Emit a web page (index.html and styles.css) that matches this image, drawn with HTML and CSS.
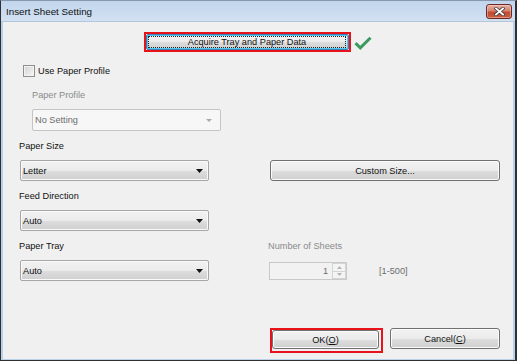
FILE: index.html
```html
<!DOCTYPE html>
<html>
<head>
<meta charset="utf-8">
<title>Insert Sheet Setting</title>
<link rel="stylesheet" href="styles.css">
</head>
<body>
<div class="window">
  <div class="titlebar">
    <span class="title">Insert Sheet Setting</span>
    <span class="close">
      <svg width="11" height="9" viewBox="0 0 11 9">
        <path d="M2 1.5L9 7.5M9 1.5L2 7.5" stroke="#3b3b3b" stroke-width="3.4" stroke-linecap="square"/>
        <path d="M2 1.5L9 7.5M9 1.5L2 7.5" stroke="#ffffff" stroke-width="1.8" stroke-linecap="square"/>
      </svg>
    </span>
  </div>
  <div class="client">
    <div class="acquire-row">
      <div class="annot">
        <div class="btn default"><span class="focus">Acquire Tray and Paper Data</span></div>
      </div>
      <svg class="check" width="18" height="14" viewBox="0 0 18 14">
        <path d="M1.5 7.2L6.3 11.8L16.5 1.8" fill="none" stroke="#3b9b5f" stroke-width="3"/>
      </svg>
    </div>

    <div class="chk-row">
      <span class="chk"></span>
      <span class="chk-label">Use Paper Profile</span>
    </div>

    <div class="indent">
      <div class="lbl dim">Paper Profile</div>
      <div class="combo off">
        <span>No Setting</span>
        <svg width="6" height="3" viewBox="0 0 6 3"><path d="M0 0h6L3 3z" fill="#a9a9a9"/></svg>
      </div>
    </div>

    <div class="lbl lbl-gap">Paper Size</div>
    <div class="grid row-gap">
      <div class="combo">
        <span>Letter</span>
        <svg width="7" height="4" viewBox="0 0 7 4"><path d="M0 0h7L3.5 4z" fill="#111"/></svg>
      </div>
      <div class="btn custom">Custom Size...</div>
    </div>

    <div class="lbl lbl-gap">Feed Direction</div>
    <div class="grid row-gap">
      <div class="combo">
        <span>Auto</span>
        <svg width="7" height="4" viewBox="0 0 7 4"><path d="M0 0h7L3.5 4z" fill="#111"/></svg>
      </div>
    </div>

    <div class="grid lbl-gap">
      <div class="lbl">Paper Tray</div>
      <div class="lbl dim">Number of Sheets</div>
    </div>
    <div class="grid row-gap">
      <div class="combo">
        <span>Auto</span>
        <svg width="7" height="4" viewBox="0 0 7 4"><path d="M0 0h7L3.5 4z" fill="#111"/></svg>
      </div>
      <div class="sheets">
        <div class="spin">
          <span class="spin-val">1</span>
          <span class="spin-btns">
            <span class="spin-b"><svg width="5" height="3" viewBox="0 0 5 3"><path d="M0 3h5L2.5 0z" fill="#b5b5b5"/></svg></span>
            <span class="spin-b"><svg width="5" height="3" viewBox="0 0 5 3"><path d="M0 0h5L2.5 3z" fill="#b5b5b5"/></svg></span>
          </span>
        </div>
        <span class="range">[1-500]</span>
      </div>
    </div>

    <div class="footer">
      <div class="annot ok-annot">
        <div class="btn ok">OK(<u>O</u>)</div>
      </div>
      <div class="btn cancel">Cancel(<u>C</u>)</div>
    </div>
  </div>
</div>
</body>
</html>
```

FILE: styles.css
```css
* { box-sizing: border-box; }
html, body { margin: 0; padding: 0; }
body {
  width: 517px;
  height: 361px;
  overflow: hidden;
  font-family: "Liberation Sans", Arial, sans-serif;
  font-size: 9.2px;
  color: #111;
  background: #fff;
}

.window {
  width: 517px;
  height: 361px;
  display: flex;
  flex-direction: column;
  border-style: solid;
  border-color: #2e3033;
  border-width: 1px 2px 1px 1px;
  border-top-color: #8597ad;
  background: #b8d0ea;
  padding: 0 2px 1px 2px;
}

.titlebar {
  height: 21px;
  margin: 0 -2px;
  display: flex;
  justify-content: space-between;
  align-items: flex-start;
  padding: 3px 3px 0 5px;
  background: linear-gradient(#c1d5ec, #d2e1f2);
  border-bottom: 1px solid #b3c6dc;
}
.title {
  font-size: 9.8px;
  line-height: 15px;
  color: #111;
}
.close {
  width: 26px;
  height: 15px;
  border: 1px solid #6b2b25;
  border-radius: 3px;
  background: linear-gradient(#e8b0a4 0%, #d7836f 45%, #c24a33 55%, #c75f43 100%);
  box-shadow: inset 0 0 0 1px rgba(255,220,210,0.45);
  display: flex;
  align-items: center;
  justify-content: center;
}

.client {
  flex: 1;
  background: #f0f0f0;
  display: flex;
  flex-direction: column;
}

/* buttons */
.btn {
  display: flex;
  align-items: center;
  justify-content: center;
  border: 1px solid #707070;
  border-radius: 3px;
  background: linear-gradient(#f2f2f2 0%, #ebebeb 50%, #dddddd 51%, #cfcfcf 100%);
  box-shadow: inset 0 0 0 1px #fbfbfb;
  color: #111;
  white-space: nowrap;
}
.btn u { text-decoration: underline; }

.annot { border: 2px solid #e8121b; }

.acquire-row {
  display: flex;
  align-items: center;
  margin-top: 10px;
  padding-left: 141px;
}
.acquire-row .annot { width: 207px; height: 20px; }
.btn.default {
  height: 100%;
  border-color: #3c7fb1;
  border-radius: 2px;
  box-shadow: inset 0 0 0 1px #52c8f2;
  padding: 1px 2px 1px 1px;
}
.focus {
  flex: 1;
  height: 100%;
  border: 1px dotted #222;
  display: flex;
  align-items: center;
  justify-content: center;
}
.check { margin-left: 3px; margin-top: 2px; }

.chk-row {
  display: flex;
  align-items: center;
  margin-top: 13px;
  padding-left: 20px;
  height: 12px;
}
.chk {
  width: 12px;
  height: 12px;
  border: 1px solid #8e8f8f;
  background: linear-gradient(135deg, #d2d2d2, #f7f7f7);
  box-shadow: inset 0 0 0 1px #f3f3f3;
}
.chk-label { margin-left: 3px; }

.lbl { line-height: 12px; height: 12px; white-space: nowrap; }
.dim { color: #8b8b8b; }

.indent { padding-left: 29px; margin-top: 12px; }
.indent .combo { margin-top: 8px; }

.lbl-gap { margin-top: 9px; }
.client > .lbl { padding-left: 16px; }

.grid {
  display: grid;
  grid-template-columns: 189px 1fr;
  column-gap: 59px;
  padding-left: 17px;
  padding-right: 13px;
}
.grid > .lbl:first-child { margin-left: -1px; }
.row-gap { margin-top: 8px; }

.combo {
  width: 189px;
  height: 21px;
  display: flex;
  align-items: center;
  justify-content: space-between;
  padding: 0 5px 0 2px;
  border: 1px solid #a6a6a6;
  border-radius: 2px;
  background: linear-gradient(#f2f2f2 0%, #ebebeb 50%, #dddddd 51%, #cfcfcf 100%);
  box-shadow: inset 0 0 0 1px #fafafa;
}
.combo.off {
  height: 22px;
  border-color: #c4c4c4;
  background: #f7f7f7;
  box-shadow: none;
  color: #6d6d6d;
  padding-right: 8px;
}

.btn.custom { margin-left: 2px; height: 21px; }

.sheets {
  display: flex;
  align-items: center;
  margin-left: 1px;
}
.spin {
  width: 78px;
  height: 18px;
  margin-top: 1px;
  border: 1px solid #c9c9c9;
  background: #f2f2f2;
  display: flex;
  align-items: stretch;
  justify-content: flex-end;
}
.spin-val {
  color: #6d6d6d;
  line-height: 16px;
  padding-right: 4px;
}
.spin-btns {
  width: 14px;
  display: flex;
  flex-direction: column;
}
.spin-b {
  flex: 1;
  border: 1px solid #d4d4d4;
  background: #f4f4f4;
  display: flex;
  align-items: center;
  justify-content: center;
}
.spin-b + .spin-b { border-top: none; }
.range { margin-left: 32px; color: #6d6d6d; }

.footer {
  margin-top: auto;
  display: flex;
  align-items: flex-start;
  padding-left: 267px;
  padding-bottom: 6px;
}
.ok-annot { padding: 0 2px 2px 0; }
.btn.ok { width: 107px; height: 19px; }
.btn.cancel { width: 110px; height: 21px; margin-left: 7px; }
```
